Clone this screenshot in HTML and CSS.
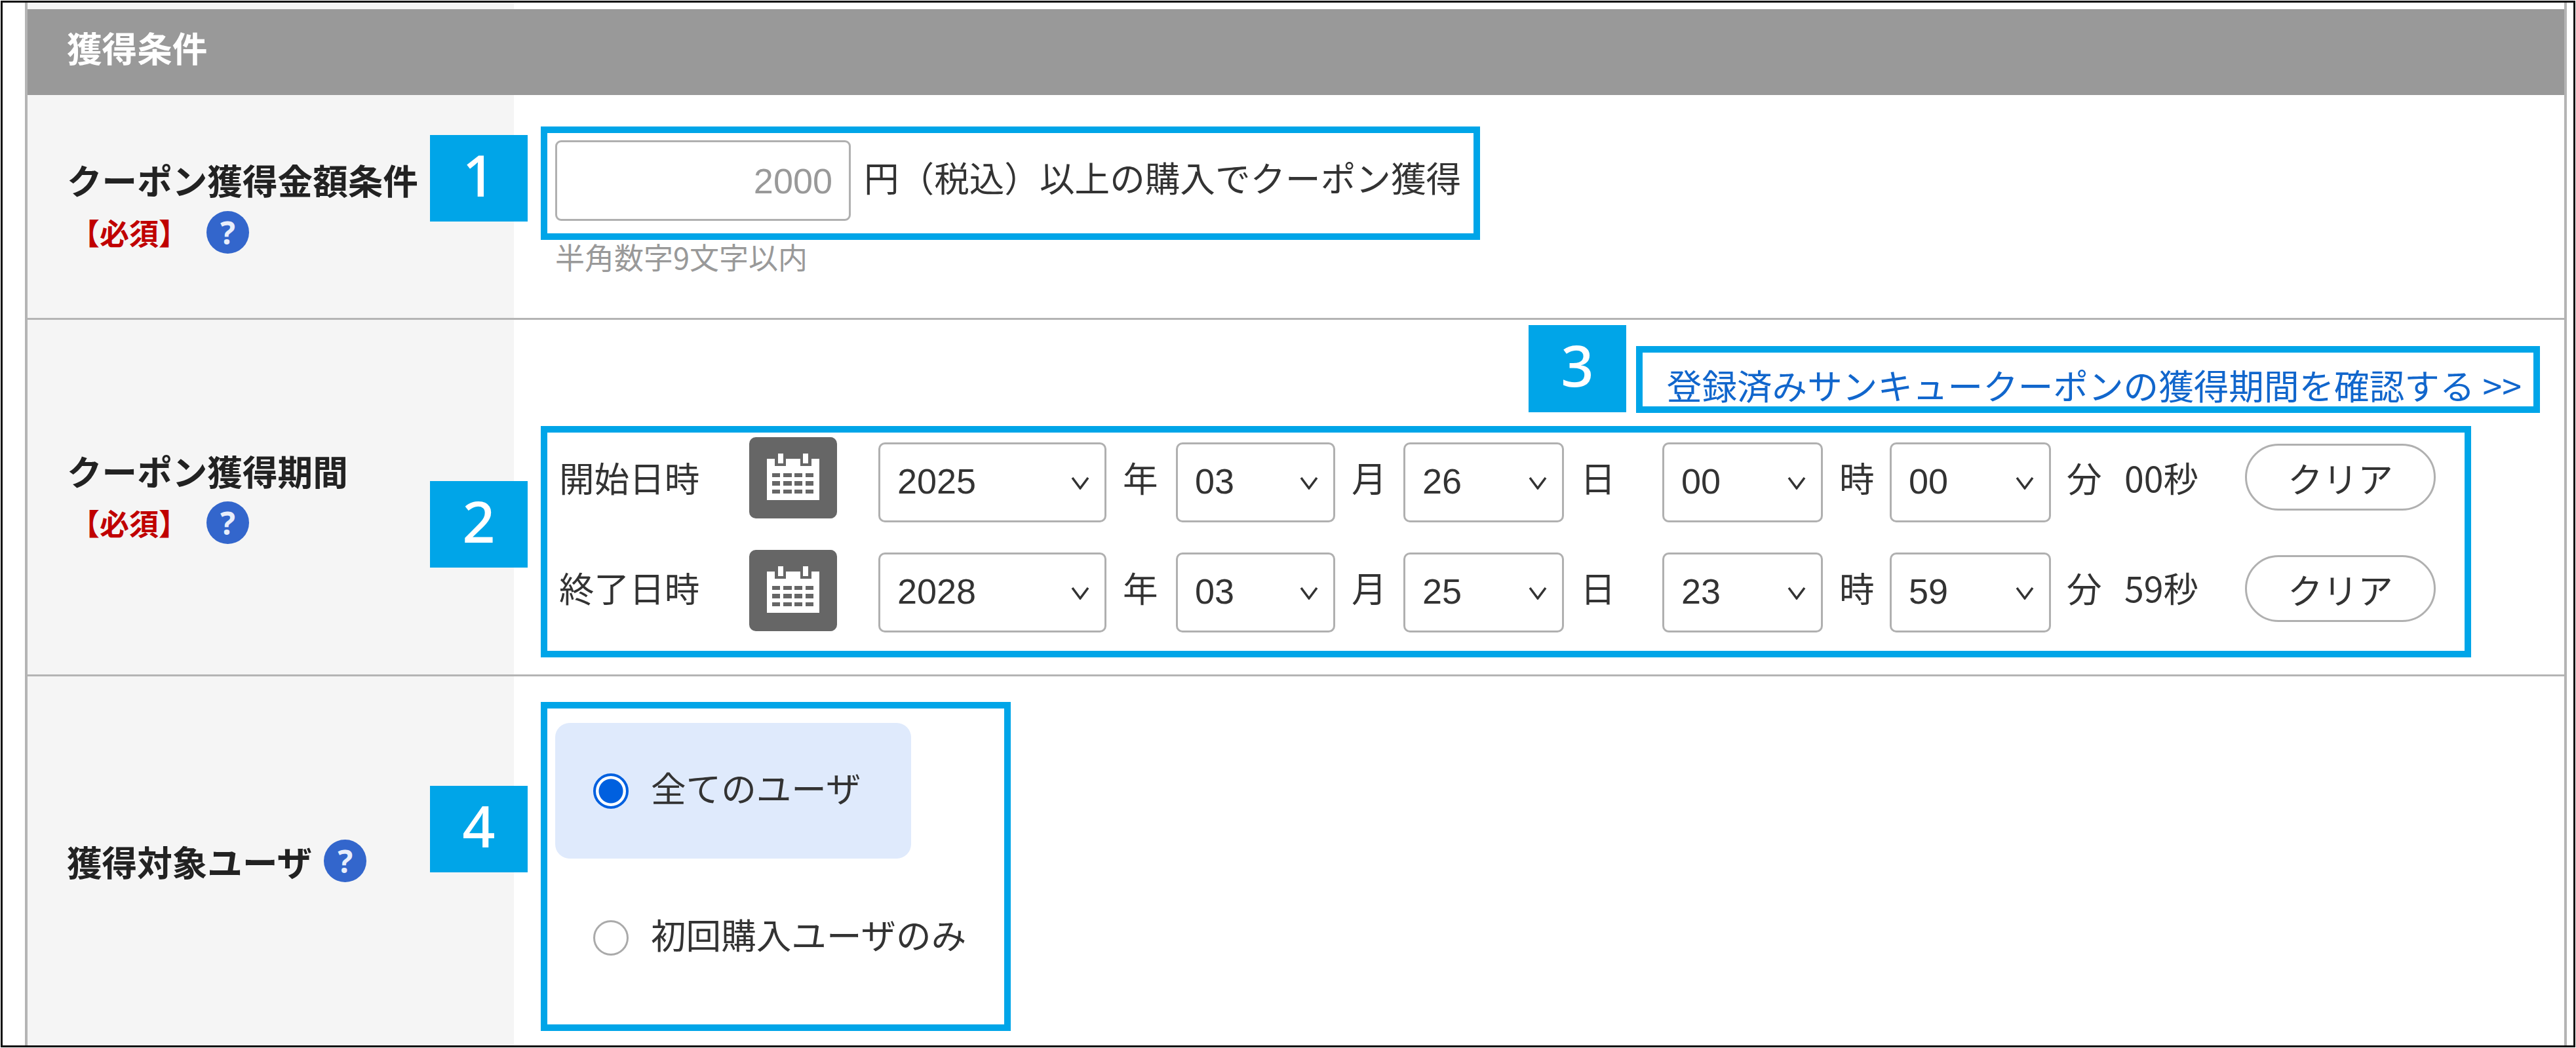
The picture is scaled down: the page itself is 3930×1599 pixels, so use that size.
FILE: index.html
```html
<!DOCTYPE html>
<html lang="ja">
<head>
<meta charset="utf-8">
<title>獲得条件</title>
<link rel="stylesheet" href="styles.css">
</head>
<body>
<div class="page">
  <div class="frame">
    <div class="panel">
      <div class="row row-top"><div class="th"></div><div class="td"></div></div>
      <h2 class="section-title">獲得条件</h2>

      <div class="row row-amount">
        <div class="th">
          <div class="th-title">クーポン獲得金額条件</div>
          <div class="th-sub"><span class="required">【必須】</span><span class="help">?</span></div>
        </div>
        <div class="td td-amount">
          <div class="amount-line">
            <input class="amount-input" type="text" placeholder="2000">
            <span class="amount-text">円（税込）以上の購入でクーポン獲得</span>
          </div>
          <p class="note">半角数字9文字以内</p>
        </div>
      </div>

      <div class="row row-period">
        <div class="th">
          <div class="th-title">クーポン獲得期間</div>
          <div class="th-sub"><span class="required">【必須】</span><span class="help">?</span></div>
        </div>
        <div class="td td-period">
          <div class="link-line"><a class="link" href="#">登録済みサンキュークーポンの獲得期間を確認する &gt;&gt;</a></div>
          <div class="date-row">
            <span class="date-label">開始日時</span>
            <button class="cal-btn" type="button" aria-label="カレンダー">
              <svg class="cal-icon" viewBox="0 0 80 72" width="80" height="72"><path fill="#fff" d="M0 9h12v11h17V9h22v11h17V9h12v63H0z"/><path fill="#fff" d="M17 1h8v15h-8zM55 1h8v15h-8z"/><g fill="#666"><rect x="8" y="31" width="12" height="6"/><rect x="25" y="31" width="13" height="6"/><rect x="42" y="31" width="12" height="6"/><rect x="59" y="31" width="12" height="6"/><rect x="8" y="43" width="12" height="7"/><rect x="25" y="43" width="13" height="7"/><rect x="42" y="43" width="12" height="7"/><rect x="59" y="43" width="12" height="7"/><rect x="8" y="56" width="12" height="6"/><rect x="25" y="56" width="13" height="6"/><rect x="42" y="56" width="12" height="6"/><rect x="59" y="56" width="12" height="6"/></g></svg>
            </button>
            <select class="sel sel-year"><option>2025</option></select>
            <span class="unit unit-year">年</span>
            <select class="sel sel-month"><option>03</option></select>
            <span class="unit unit-month">月</span>
            <select class="sel sel-day"><option>26</option></select>
            <span class="unit unit-day">日</span>
            <select class="sel sel-hour"><option>00</option></select>
            <span class="unit unit-hour">時</span>
            <select class="sel sel-min"><option>00</option></select>
            <span class="unit unit-min">分</span>
            <span class="unit-sec">00秒</span>
            <button class="clear-btn" type="button">クリア</button>
          </div>
          <div class="date-row date-row-end">
            <span class="date-label">終了日時</span>
            <button class="cal-btn" type="button" aria-label="カレンダー">
              <svg class="cal-icon" viewBox="0 0 80 72" width="80" height="72"><path fill="#fff" d="M0 9h12v11h17V9h22v11h17V9h12v63H0z"/><path fill="#fff" d="M17 1h8v15h-8zM55 1h8v15h-8z"/><g fill="#666"><rect x="8" y="31" width="12" height="6"/><rect x="25" y="31" width="13" height="6"/><rect x="42" y="31" width="12" height="6"/><rect x="59" y="31" width="12" height="6"/><rect x="8" y="43" width="12" height="7"/><rect x="25" y="43" width="13" height="7"/><rect x="42" y="43" width="12" height="7"/><rect x="59" y="43" width="12" height="7"/><rect x="8" y="56" width="12" height="6"/><rect x="25" y="56" width="13" height="6"/><rect x="42" y="56" width="12" height="6"/><rect x="59" y="56" width="12" height="6"/></g></svg>
            </button>
            <select class="sel sel-year"><option>2028</option></select>
            <span class="unit unit-year">年</span>
            <select class="sel sel-month"><option>03</option></select>
            <span class="unit unit-month">月</span>
            <select class="sel sel-day"><option>25</option></select>
            <span class="unit unit-day">日</span>
            <select class="sel sel-hour"><option>23</option></select>
            <span class="unit unit-hour">時</span>
            <select class="sel sel-min"><option>59</option></select>
            <span class="unit unit-min">分</span>
            <span class="unit-sec">59秒</span>
            <button class="clear-btn" type="button">クリア</button>
          </div>
        </div>
      </div>

      <div class="row row-target">
        <div class="th">
          <div class="th-title">獲得対象ユーザ<span class="help help-inline">?</span></div>
        </div>
        <div class="td td-target">
          <label class="opt opt-checked"><input class="radio" type="radio" name="target" checked><span>全てのユーザ</span></label>
          <label class="opt"><input class="radio" type="radio" name="target"><span>初回購入ユーザのみ</span></label>
        </div>
      </div>
    </div>
  </div>

  <div class="mark mark-1"></div>
  <div class="mark mark-2"></div>
  <div class="mark mark-3"></div>
  <div class="mark mark-4"></div>
  <div class="badge badge-1">1</div>
  <div class="badge badge-2">2</div>
  <div class="badge badge-3">3</div>
  <div class="badge badge-4">4</div>
</div>
</body>
</html>
```
FILE: styles.css
```css
* { box-sizing: border-box; }
html, body { margin: 0; padding: 0; background: #fff; }
body {
  font-family: "Noto Sans CJK JP", "Noto Sans", sans-serif;
  font-size: 53.6px;
  color: #333;
}
.page { position: relative; width: 3930px; height: 1599px; overflow: hidden; padding: 1px; }
.frame {
  width: 3928px;
  height: 1597px;
  border: 3px solid #111;
  padding-left: 34px;
}
.panel {
  width: 3878px;
  height: 100%;
  border-left: 4px solid #b4b4b4;
  border-right: 4px solid #b4b4b4;
  display: flex;
  flex-direction: column;
}
.row {
  display: grid;
  grid-template-columns: 742px 1fr;
  border-bottom: 3px solid #b4b4b4;
}
.row-top { height: 10px; border-bottom: 0; }
.row-amount { height: 343px; }
.row-period { height: 544px; }
.row-target { flex: 1; border-bottom: 0; }

.section-title {
  margin: 0;
  height: 131px;
  background: #999;
  color: #fff;
  font-size: 53.6px;
  font-weight: 700;
  line-height: 115px;
  padding-left: 60px;
}
.th {
  background: #f5f5f5;
  padding-left: 60px;
  display: flex;
  flex-direction: column;
  justify-content: center;
}
.th-title { font-weight: 700; font-size: 53.6px; line-height: 74px; height: 78px; color: #222; white-space: nowrap; display: flex; align-items: flex-start; }
.row-target .th-title { line-height: 78px; align-items: center; }
.th-sub { display: flex; align-items: center; height: 78px; }
.required { color: #c00000; font-weight: 700; font-size: 45px; width: 176px; margin-left: 5px; white-space: nowrap; }
.help {
  width: 65px;
  height: 65px;
  margin-left: 32px;
  border-radius: 50%;
  background: #3366cc;
  color: #e8eefb;
  font-family: "Noto Sans", sans-serif;
  font-weight: 700;
  font-size: 48px;
  line-height: 65px;
  text-align: center;
}
.help-inline { margin-left: 18px; }

.td { background: #fff; }
.td-amount { padding: 69px 0 0 63px; }
.amount-line { display: flex; align-items: flex-start; }
.amount-input {
  width: 451px;
  height: 123px;
  border: 3px solid #b0b0b0;
  border-radius: 9px;
  padding: 0 25px 0 0;
  font: 54px "Liberation Sans", sans-serif;
  text-align: right;
  background: #fff;
}
.amount-input::placeholder { color: #999; opacity: 1; }
.amount-text { margin-left: 20px; line-height: 111px; white-space: nowrap; }
.note { margin: 25px 0 0; font-size: 45px; line-height: 60px; color: #999; }

.td-period { padding: 60px 65px 0 63px; }
.link-line { text-align: right; height: 70px; margin-bottom: 57px; }
.link { color: #1166cc; text-decoration: none; font-size: 53.6px; line-height: 70px; white-space: nowrap; }

.date-row { display: flex; align-items: flex-start; height: 123px; white-space: nowrap; line-height: 106px; }
.date-row-end { margin-top: 45px; }
.date-label { width: 296px; padding-left: 6px; }
.cal-btn {
  width: 134px;
  height: 124px;
  margin: -8px 63px 0 0;
  padding: 0;
  border: 0;
  border-radius: 10px;
  background: #666;
  display: flex;
  align-items: center;
  justify-content: center;
}
.date-row-end .cal-btn { margin-top: -4px; }
.cal-icon { display: block; margin-top: -4px; }
.sel {
  appearance: none;
  height: 122px;
  border: 3px solid #b0b0b0;
  border-radius: 10px;
  padding: 0 0 4px 26px;
  font: 54px "Liberation Sans", sans-serif;
  color: #333;
  background: #fff url("data:image/svg+xml;utf8,<svg xmlns='http://www.w3.org/2000/svg' width='28' height='19'><path d='M2 1l12 16L26 1' fill='none' stroke='%23333' stroke-width='3.5'/></svg>") no-repeat right 23px top 50px;
}
.sel-year { width: 348px; }
.sel-month { width: 243px; }
.sel-day { width: 245px; }
.sel-hour { width: 245px; }
.sel-min { width: 246px; }
.unit { padding-left: 25px; }
.unit-year { width: 106px; }
.unit-month { width: 104px; }
.unit-day { width: 150px; }
.unit-hour { width: 102px; }
.unit-min { width: 112px; padding-left: 24px; }
.unit-sec { width: 184px; }
.clear-btn {
  width: 291px;
  height: 102px;
  margin-top: 2px;
  padding: 0;
  border: 3px solid #b0b0b0;
  border-radius: 51px;
  background: #fff;
  color: #333;
  font: 53.6px "Noto Sans CJK JP", sans-serif;
}
.date-row-end .clear-btn { margin-top: 4px; }

.td-target { padding: 71px 0 0 63px; }
.opt {
  display: flex;
  align-items: center;
  gap: 34px;
  width: 543px;
  height: 207px;
  padding-left: 58px;
  border-radius: 22px;
  white-space: nowrap;
}
.opt + .opt { margin-top: 17px; }
.opt span { padding-bottom: 13px; }
.opt-checked { background: #dfeafc; }
.radio {
  appearance: none;
  flex: none;
  width: 54px;
  height: 54px;
  margin: 0;
  border: 3px solid #aaa;
  border-radius: 50%;
  background: #fff;
}
.radio:checked {
  border: 4px solid #0060df;
  background: radial-gradient(circle, #0060df 18px, #fff 19px);
}

.mark { position: absolute; border: 10px solid #00a5e8; }
.mark-1 { left: 825px; top: 193px; width: 1433px; height: 173px; }
.mark-2 { left: 825px; top: 650px; width: 2945px; height: 353px; }
.mark-3 { left: 2496px; top: 528px; width: 1379px; height: 102px; }
.mark-4 { left: 825px; top: 1071px; width: 717px; height: 502px; }
.badge {
  position: absolute;
  width: 149px;
  height: 132px;
  background: #00a5e8;
  color: #fff;
  font-family: "Noto Sans", sans-serif;
  font-weight: 500;
  font-size: 88px;
  line-height: 120px;
  text-align: center;
}
.badge-1 { left: 656px; top: 206px; }
.badge-2 { left: 656px; top: 734px; }
.badge-3 { left: 2332px; top: 496px; height: 133px; }
.badge-4 { left: 656px; top: 1199px; }
```
